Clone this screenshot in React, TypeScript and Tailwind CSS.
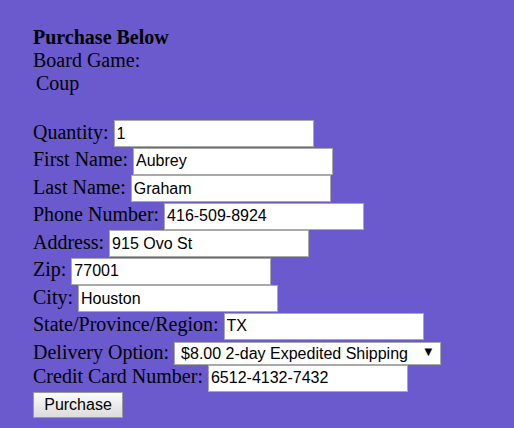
import React from 'react';

const fields = [
  { label: 'Quantity:', value: '1' },
  { label: 'First Name:', value: 'Aubrey' },
  { label: 'Last Name:', value: 'Graham' },
  { label: 'Phone Number:', value: '416-509-8924' },
  { label: 'Address:', value: '915 Ovo St' },
  { label: 'Zip:', value: '77001' },
  { label: 'City:', value: 'Houston' },
  { label: 'State/Province/Region:', value: 'TX' },
];

const inputClass =
  "w-[200px] h-[27px] bg-white border border-[#a9a9a9] pl-[2px] text-[16px] text-black font-['Liberation_Sans',Arial,sans-serif] outline-none";

function Row({ label, value }: { label: string; value: string }) {
  return (
    <div className="flex items-baseline gap-[5px] h-[27.5px]">
      <label>{label}</label>
      <input className={inputClass} defaultValue={value} />
    </div>
  );
}

export default function App() {
  return (
    <div className="min-h-screen bg-[#6a5acd] pt-[26px] pl-[33px] text-[20px] leading-[23px] text-black font-['Liberation_Serif','Times_New_Roman',serif]">
      {/* Heading */}
      <div className="font-bold">Purchase Below</div>
      <div>Board Game:</div>
      <div className="pl-[3px]">Coup</div>
      <div className="h-[25px]" />

      {/* Form */}
      <form onSubmit={(e) => e.preventDefault()}>
        {fields.map((f) => (
          <Row key={f.label} label={f.label} value={f.value} />
        ))}

        <div className="flex items-baseline gap-[5px] h-[24.5px]">
          <label>Delivery Option:</label>
          <div className="relative mt-[1px]">
            <select
              defaultValue="expedited"
              className="appearance-none w-[267px] h-[23px] bg-white border border-[#a9a9a9] pl-[6px] text-[16px] leading-[21px] text-black font-['Liberation_Sans',Arial,sans-serif] outline-none"
            >
              <option value="standard">$0.00 Standard Shipping</option>
              <option value="expedited">$8.00 2-day Expedited Shipping</option>
            </select>
            <span className="pointer-events-none absolute right-[9px] top-[5px] text-[10px] leading-[12px] font-['DejaVu_Sans',sans-serif]">
              ▼
            </span>
          </div>
        </div>

        <Row label="Credit Card Number:" value="6512-4132-7432" />

        <button
          type="submit"
          className="w-[90px] h-[26px] bg-gradient-to-b from-[#fbfbfb] to-[#dcdcdc] border border-[#9a9a9a] text-[16px] leading-[20px] text-black font-['Liberation_Sans',Arial,sans-serif]"
        >
          Purchase
        </button>
      </form>
    </div>
  );
}
